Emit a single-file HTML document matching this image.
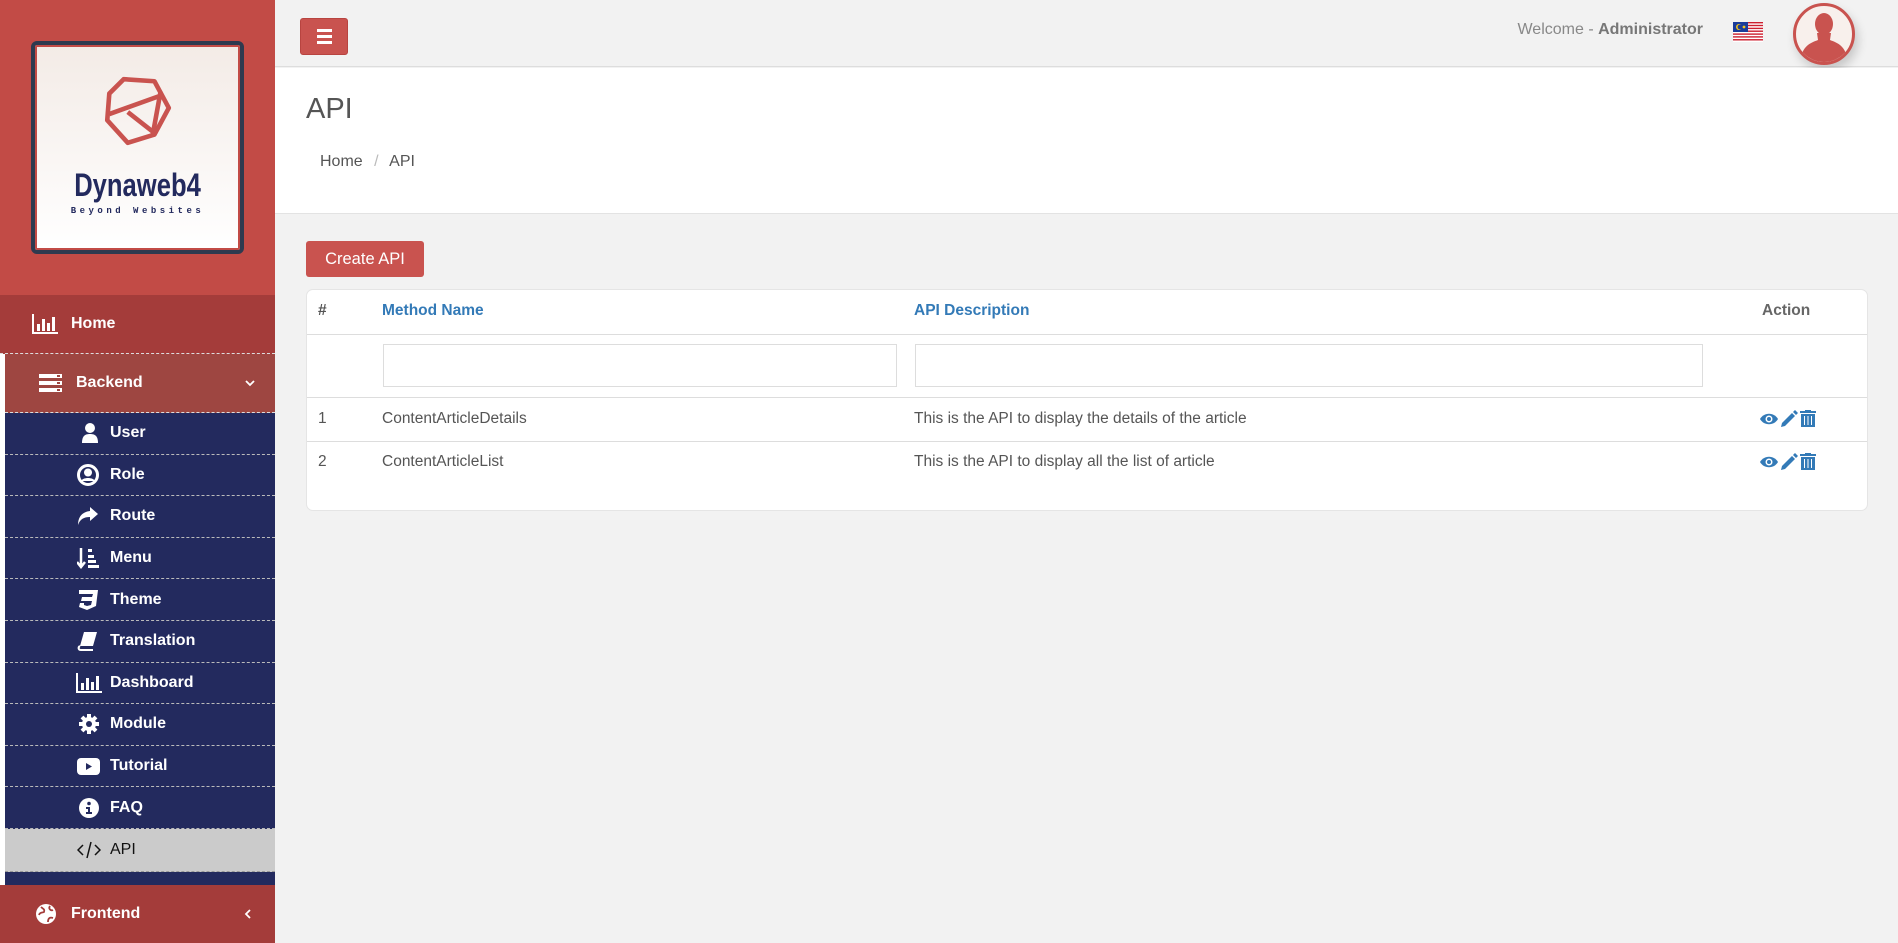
<!DOCTYPE html>
<html><head><meta charset="utf-8"><style>
*{box-sizing:border-box;margin:0;padding:0}
body{width:1898px;height:943px;overflow:hidden;background:#f2f2f2;font-family:"Liberation Sans",sans-serif;position:relative}
.sb{position:absolute;left:0;top:0;width:275px;height:943px;background:#c24b46}
.logo{position:absolute;left:31px;top:41px;width:213px;height:213px;border:4px solid #2e3a4f;border-radius:6px;background:linear-gradient(#f3ebe6,#fff);box-shadow:inset 0 0 0 2px #c24b46}
.logo .t1{position:absolute;left:0;right:0;top:122px;text-align:center;font:bold 32px "Liberation Sans",sans-serif;color:#232a5e;transform:scaleX(.8)}
.logo .t2{position:absolute;left:0;right:0;top:161px;text-align:center;font:bold 9px "Liberation Mono",monospace;color:#232a5e;letter-spacing:3.5px}
.item{position:absolute;left:0;width:275px;color:#fff;font-weight:bold;font-size:16px;display:flex;align-items:center}
.home{top:295px;height:59px;background:#a43c3a;border-bottom:1px dashed #ddd}
.back{top:354px;height:59px;left:5px;width:270px;background:#9e4641;border-bottom:1px dashed #ddd}
.sub{left:5px;width:270px;height:41.6px;background:#232a5e;border-bottom:1px dashed #bbb;font-size:16px}
.sub svg{position:absolute;left:68px}
.sub span{position:absolute;left:105px}
.front{top:885px;height:58px;background:#a43c3a}
.white{position:absolute;left:0;top:354px;width:5px;height:531px;background:#fff}
.navy{position:absolute;left:5px;top:413px;width:270px;height:472px;background:#232a5e}
.top{position:absolute;left:275px;top:0;right:0;height:67px;background:#f2f2f2;border-bottom:1px solid #ddd}
.ham{position:absolute;left:300px;top:18px;width:48px;height:37px;background:#c9534f;border-radius:3px;border:1px solid #b84440}
.ham i{position:absolute;left:16px;width:15px;height:3px;background:#fff}
.hdr{position:absolute;left:275px;top:68px;right:0;height:146px;background:#fff;border-bottom:1px solid #e3e3e3}
.card{position:absolute;left:306px;top:289px;width:1562px;height:222px;background:#fff;border-radius:7px;border:1px solid #e5e5e5}
.hl{position:absolute;left:0;right:0;height:1px;background:#ddd}
.tx{position:absolute;font-size:15.5px;color:#555;white-space:nowrap}
.th{position:absolute;font-size:15.5px;font-weight:bold;white-space:nowrap;color:#337ab7}
.inp{position:absolute;height:43px;border:1px solid #ddd;background:#fff}
</style></head><body>
<div class="sb">
 <div class="logo">
  <svg style="position:absolute;left:62px;top:26px" width="80" height="80" viewBox="0 0 78 78"><g fill="none" stroke="#c9534f" stroke-width="4.5" stroke-linejoin="round"><path d="M26 8 L56 10 L70 36 L56 62 L30 70 L10 48 L12 22 Z"/><path d="M12 42 L62 24 M30 40 L58 62 M62 20 L54 64"/></g></svg>
  <div class="t1">Dynaweb4</div>
  <div class="t2">Beyond Websites</div>
 </div>
 <div class="item home"><svg style="position:absolute;left:32px" width="26" height="20" viewBox="0 0 26 20"><path d="M1 0V19H26" stroke="#fff" stroke-width="2" fill="none"/><rect x="5" y="10" width="3" height="7" fill="#fff"/><rect x="10" y="5" width="3" height="12" fill="#fff"/><rect x="15" y="9" width="3" height="8" fill="#fff"/><rect x="20" y="3" width="3" height="14" fill="#fff"/></svg><span style="position:absolute;left:71px">Home</span></div>
 <div class="white"></div>
 <div class="item back"><svg style="position:absolute;left:34px" width="23" height="18" viewBox="0 0 23 18"><rect y="0" width="23" height="4" fill="#fff"/><rect y="7" width="23" height="4" fill="#fff"/><rect y="14" width="23" height="4" fill="#fff"/><rect x="18" y="1" width="3" height="2" fill="#9e4641"/><rect x="18" y="8" width="3" height="2" fill="#9e4641"/><rect x="18" y="15" width="3" height="2" fill="#9e4641"/></svg><span style="position:absolute;left:71px">Backend</span><svg style="position:absolute;left:240px" width="10" height="8" viewBox="0 0 10 8"><path d="M1 2L5 6L9 2" stroke="#fff" stroke-width="1.8" fill="none"/></svg></div>
 <div class="navy"></div>
 <div class="item sub" style="top:413px"><svg width="22" height="22" viewBox="0 0 22 22" style="left:74px"><circle cx="11" cy="6" r="5" fill="#fff"/><path d="M3 21C3 14 6 12 11 12S19 14 19 21Z" fill="#fff"/></svg><span>User</span></div>
 <div class="item sub" style="top:454.6px"><svg width="22" height="22" viewBox="0 0 22 22" style="left:72px"><circle cx="11" cy="11" r="9.5" fill="none" stroke="#fff" stroke-width="3"/><circle cx="11" cy="8.5" r="4" fill="#fff"/><path d="M4 17C6 13 16 13 18 17" fill="#fff"/></svg><span>Role</span></div>
 <div class="item sub" style="top:496.2px"><svg width="22" height="20" viewBox="0 0 22 20" style="left:72px"><path d="M13 1L21 8L13 15V11C7 11 3 13 1 19C1 11 5 6 13 5Z" fill="#fff"/></svg><span>Route</span></div>
 <div class="item sub" style="top:537.8px"><svg width="22" height="22" viewBox="0 0 22 22" style="left:72px"><path d="M4 1V18M0 15L4 20L8 15" stroke="#fff" stroke-width="2.5" fill="none"/><rect x="11" y="2" width="4" height="3" fill="#fff"/><rect x="11" y="8" width="6" height="3" fill="#fff"/><rect x="11" y="13" width="8" height="3" fill="#fff"/><rect x="11" y="18" width="11" height="3" fill="#fff"/></svg><span>Menu</span></div>
 <div class="item sub" style="top:579.4px"><svg width="22" height="22" viewBox="0 0 22 22" style="left:72px"><path d="M2 1H21L19 17L10 21L2 18L3 14H7V16L10 17L14 16L15 12H4L5 8H15L16 5H2Z" fill="#fff"/></svg><span>Theme</span></div>
 <div class="item sub" style="top:621px"><svg width="22" height="22" viewBox="0 0 22 22" style="left:72px"><path d="M7 2H20L16 16H3Z" fill="#fff"/><path d="M3 16C1 17 1 20 4 20H16" stroke="#fff" stroke-width="2" fill="none"/></svg><span>Translation</span></div>
 <div class="item sub" style="top:662.6px"><svg width="26" height="20" viewBox="0 0 26 20" style="left:71px"><path d="M1 0V19H26" stroke="#fff" stroke-width="2" fill="none"/><rect x="5" y="10" width="3" height="7" fill="#fff"/><rect x="10" y="5" width="3" height="12" fill="#fff"/><rect x="15" y="9" width="3" height="8" fill="#fff"/><rect x="20" y="3" width="3" height="14" fill="#fff"/></svg><span>Dashboard</span></div>
 <div class="item sub" style="top:704.2px"><svg width="20" height="20" viewBox="0 0 20 20" style="left:74px"><circle cx="10" cy="10" r="7" fill="#fff"/><g stroke="#fff" stroke-width="4"><path d="M10 0V20M0 10H20M3 3L17 17M17 3L3 17"/></g><circle cx="10" cy="10" r="3" fill="#232a5e"/></svg><span>Module</span></div>
 <div class="item sub" style="top:745.8px"><svg width="23" height="17" viewBox="0 0 23 17" style="left:72px"><rect width="23" height="17" rx="4" fill="#fff"/><path d="M9 5L15 8.5L9 12Z" fill="#232a5e"/></svg><span>Tutorial</span></div>
 <div class="item sub" style="top:787.4px"><svg width="20" height="20" viewBox="0 0 20 20" style="left:74px"><circle cx="10" cy="10" r="10" fill="#fff"/><circle cx="10" cy="5.5" r="1.8" fill="#232a5e"/><path d="M7 9H11V14H13V16H7V14H9V11H7Z" fill="#232a5e"/></svg><span>FAQ</span></div>
 <div class="item sub" style="top:829px;height:43px;background:#cbcbcb;color:#111;font-weight:normal;border-bottom:1px dashed #999"><svg width="24" height="18" viewBox="0 0 24 18" style="left:72px"><path d="M6 4L1 9L6 14M18 4L23 9L18 14M14 1L10 17" stroke="#111" stroke-width="1.5" fill="none"/></svg><span>API</span></div>
 <div class="item front"><svg style="position:absolute;left:36px" width="20" height="20" viewBox="0 0 20 20"><circle cx="10" cy="10" r="10" fill="#fff"/><path d="M5 3C7 5 9 5 8 8C6 9 4 8 3 11M14 2C12 5 15 7 17 6M12 18C12 14 14 13 17 14" stroke="#a43c3a" stroke-width="1.8" fill="none"/></svg><span style="position:absolute;left:71px">Frontend</span><svg style="position:absolute;left:244px" width="8" height="10" viewBox="0 0 8 10"><path d="M6 1L2 5L6 9" stroke="#fff" stroke-width="1.8" fill="none"/></svg></div>
</div>
<div class="top"></div>
<div class="ham"><i style="top:10px"></i><i style="top:16px"></i><i style="top:22px"></i></div>
<div style="position:absolute;right:195px;top:21px;font-size:16px;color:#888">Welcome - <b style="color:#777">Administrator</b></div>
<svg style="position:absolute;left:1733px;top:22px" width="30" height="20" viewBox="0 0 30 20"><rect width="30" height="20" fill="#fff"/><g fill="#cc1f2f"><rect y="0" width="30" height="1.4"/><rect y="2.8" width="30" height="1.4"/><rect y="5.7" width="30" height="1.4"/><rect y="8.5" width="30" height="1.4"/><rect y="11.4" width="30" height="1.4"/><rect y="14.2" width="30" height="1.4"/><rect y="17.1" width="30" height="1.4"/></g><rect width="15" height="10" fill="#1a3c9a"/><circle cx="6" cy="5" r="3" fill="#f5c518"/><circle cx="7" cy="5" r="2.4" fill="#1a3c9a"/><circle cx="11" cy="5" r="1.4" fill="#f5c518"/></svg>
<div style="position:absolute;left:1793px;top:3px;width:62px;height:62px;border-radius:50%;background:#f8f0ec;border:3px solid #c9534f;box-shadow:3px 6px 10px rgba(0,0,0,.18);overflow:hidden"><svg width="56" height="56" viewBox="0 0 56 56"><ellipse cx="28" cy="18" rx="9" ry="11" fill="#c9534f"/><path d="M21 27L22 34C14 37 6 40 4 56H52C50 40 42 37 34 34L35 27Z" fill="#c9534f"/></svg></div>
<div class="hdr"></div>
<div style="position:absolute;left:306px;top:93px;font-size:29px;color:#555;font-weight:300">API</div>
<div style="position:absolute;left:320px;top:153px;font-size:16px;color:#555">Home <span style="color:#bbb;margin:0 7px">/</span> API</div>
<div style="position:absolute;left:306px;top:241px;width:118px;height:36px;background:#c9534f;border-radius:3px;color:#fff;font-size:16.5px;text-align:center;line-height:36px">Create API</div>
<div class="card">
 <div class="th" style="left:11px;top:12px;color:#555">#</div>
 <div class="th" style="left:75px;top:12px">Method Name</div>
 <div class="th" style="left:607px;top:12px">API Description</div>
 <div class="th" style="left:1455px;top:12px;color:#666">Action</div>
 <div class="hl" style="top:44px"></div>
 <div class="inp" style="left:76px;top:54px;width:514px"></div>
 <div class="inp" style="left:608px;top:54px;width:788px"></div>
 <div class="hl" style="top:107px"></div>
 <div class="tx" style="left:11px;top:120px">1</div>
 <div class="tx" style="left:75px;top:120px">ContentArticleDetails</div>
 <div class="tx" style="left:607px;top:120px">This is the API to display the details of the article</div>
 <div class="hl" style="top:151px"></div>
 <div class="tx" style="left:11px;top:163px">2</div>
 <div class="tx" style="left:75px;top:163px">ContentArticleList</div>
 <div class="tx" style="left:607px;top:163px">This is the API to display all the list of article</div>
 <svg style="position:absolute;left:1453px;top:120px" width="58" height="18" viewBox="0 0 58 18"><g fill="#337ab7"><path d="M0 9C4 2 14 2 18 9C14 16 4 16 0 9Z"/><circle cx="9" cy="9" r="3.5" fill="#fff"/><circle cx="9" cy="9" r="2" /><path d="M21 17L22 13L32 3L35 6L25 16Z"/><path d="M33 2L35 0L38 3L36 5Z"/><rect x="40" y="1" width="16" height="2"/><rect x="45" y="0" width="6" height="2"/><path d="M41 4H55V17H41Z"/></g><g stroke="#fff" stroke-width="1"><path d="M44.5 6V15M48 6V15M51.5 6V15"/></g></svg>
 <svg style="position:absolute;left:1453px;top:163px" width="58" height="18" viewBox="0 0 58 18"><g fill="#337ab7"><path d="M0 9C4 2 14 2 18 9C14 16 4 16 0 9Z"/><circle cx="9" cy="9" r="3.5" fill="#fff"/><circle cx="9" cy="9" r="2" /><path d="M21 17L22 13L32 3L35 6L25 16Z"/><path d="M33 2L35 0L38 3L36 5Z"/><rect x="40" y="1" width="16" height="2"/><rect x="45" y="0" width="6" height="2"/><path d="M41 4H55V17H41Z"/></g><g stroke="#fff" stroke-width="1"><path d="M44.5 6V15M48 6V15M51.5 6V15"/></g></svg>
</div>
</body></html>
